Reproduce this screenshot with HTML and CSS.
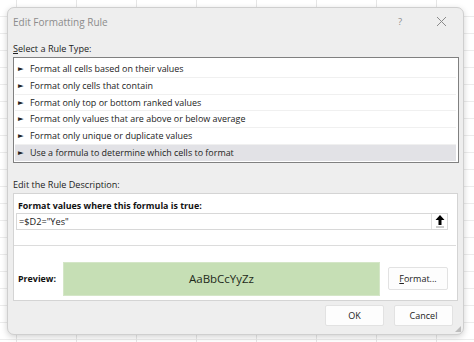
FILE: index.html
```html
<!DOCTYPE html>
<html>
<head>
<meta charset="utf-8">
<link rel="stylesheet" href="styles.css">
</head>
<body>
<div class="dialog">
  <div class="titlebar">
    <span class="title">Edit Formatting Rule</span>
    <span class="help">?</span>
    <span class="close">
      <svg width="11" height="11" viewBox="0 0 11 11"><path d="M1 1 L10 10 M10 1 L1 10" stroke="#8a8a8a" stroke-width="1" fill="none"/></svg>
    </span>
  </div>
  <div class="label first"><u>S</u>elect a Rule Type:</div>
  <div class="rulelist">
    <div class="rule"><span class="ptr">►</span>Format all cells based on their values</div>
    <div class="rule"><span class="ptr">►</span>Format only cells that contain</div>
    <div class="rule"><span class="ptr">►</span>Format only top or bottom ranked values</div>
    <div class="rule"><span class="ptr">►</span>Format only values that are above or below average</div>
    <div class="rule"><span class="ptr">►</span>Format only unique or duplicate values</div>
    <div class="rule selected"><span class="ptr">►</span>Use a formula to determine which cells to format</div>
  </div>
  <div class="label second">Edit the Rule Description:</div>
  <div class="descbox">
    <div class="formula-section">
      <div class="heading">Format values where this formula is true:</div>
      <div class="inputrow">
        <span class="formula">=$D2="Yes"</span>
        <span class="collapse">
          <svg width="12" height="14" viewBox="0 0 12 14"><path d="M6 1 L1.5 6 H4.5 V11 H7.5 V6 H10.5 Z" fill="#000"/><path d="M2 13 H10" stroke="#9a9a9a" stroke-width="1"/></svg>
        </span>
      </div>
    </div>
    <div class="preview-row">
      <span class="preview-label">Preview:</span>
      <div class="preview">AaBbCcYyZz</div>
      <button class="btn fmt"><u>F</u>ormat...</button>
    </div>
  </div>
  <div class="actions">
    <button class="btn ok">OK</button>
    <button class="btn cancel">Cancel</button>
    <span class="grip"></span>
  </div>
</div>
</body>
</html>
```
FILE: styles.css
```css
html, body {
  margin: 0;
  padding: 0;
}
body {
  width: 474px;
  height: 342px;
  overflow: hidden;
  background-color: #ffffff;
  background-image:
    repeating-linear-gradient(90deg, transparent 0, transparent 16px, #e6e6e6 16px, #e6e6e6 17px, transparent 17px, transparent 60px),
    repeating-linear-gradient(180deg, transparent 0, transparent 16px, #ececec 16px, #ececec 17px);
  font-family: "Open Sans", "Noto Sans", sans-serif;
  color: #222;
}
.dialog {
  position: relative;
  margin: 7px 0 0 7px;
  width: 455px;
  height: 326px;
  background: #eeeeee;
  border: 1px solid #cfcfcf;
  border-radius: 7px;
  box-shadow: 0 2px 6px rgba(0,0,0,0.18);
  display: flex;
  flex-direction: column;
}
.titlebar {
  height: 27px;
  display: flex;
  align-items: center;
  padding-left: 5px;
}
.title {
  flex: 1;
  font-size: 10px;
  color: #8c8c8c;
  padding-top: 1px;
}
.help {
  font-size: 9.5px;
  color: #8c8c8c;
  width: 12px;
  margin-right: 26px;
}
.close {
  width: 11px;
  height: 11px;
  margin-right: 16px;
  display: flex;
}
.label {
  font-size: 9.1px;
  color: #222;
  padding-left: 5px;
  line-height: 16px;
  height: 16px;
}
.label.first {
  padding-top: 6px;
}
.label.second {
  padding-top: 14px;
}
.rulelist {
  margin: 0 4px 0 5px;
  background: #fff;
  border: 1px solid #808080;
  padding: 3px 2px 1px 1px;
}
.rule {
  height: 15.8px;
  line-height: 16.4px;
  border-bottom: 1px solid #f0f0f0;
  font-size: 8.95px;
  color: #222;
  padding-left: 3px;
  white-space: nowrap;
}
.rule:last-child {
  border-bottom: none;
}
.rule.selected {
  background: #e2e2e6;
}
.ptr {
  font-family: "DejaVu Sans", sans-serif;
  font-size: 7.5px;
  display: inline-block;
  width: 12px;
  vertical-align: 1px;
}
.descbox {
  margin: 0 5px 0 5px;
  background: #fff;
  border: 1px solid #d4d4d4;
  height: 106px;
}
.formula-section {
  margin-right: 1px;
  border-bottom: 1px solid #dcdcdc;
  height: 51px;
}
.heading {
  font-size: 8.9px;
  font-weight: 700;
  padding: 5px 0 0 4px;
  line-height: 13px;
  height: 13px;
  color: #111;
}
.inputrow {
  margin: 1px 8px 0 2px;
  height: 15px;
  border: 1px solid #d8d8d8;
  display: flex;
  align-items: center;
}
.formula {
  flex: 1;
  font-size: 9.2px;
  padding-left: 2px;
  color: #222;
}
.collapse {
  width: 15px;
  height: 15px;
  border-left: 1px solid #e0e0e0;
  display: flex;
  align-items: center;
  justify-content: center;
}
.preview-row {
  display: flex;
  align-items: center;
  height: 54px;
  padding-top: 12px;
  box-sizing: border-box;
}
.preview-label {
  font-size: 8.9px;
  font-weight: 700;
  width: 45px;
  padding-left: 4px;
  color: #111;
}
.preview {
  width: 317px;
  height: 34px;
  background: #c6dfb5;
  border: 1px solid #d4e6c7;
  box-sizing: border-box;
  display: flex;
  align-items: center;
  justify-content: center;
  font-size: 11.5px;
  color: #1e2a1a;
}
.btn {
  font-family: "Open Sans", "Noto Sans", sans-serif;
  font-size: 9px;
  color: #222;
  background: #fdfdfd;
  border: 1px solid #e2e2e2;
  border-radius: 2px;
  padding: 0;
}
.fmt {
  width: 60px;
  height: 23px;
  margin-left: 8px;
}
.actions {
  display: flex;
  justify-content: flex-end;
  align-items: center;
  padding-top: 4px;
  padding-right: 10px;
  gap: 10px;
}
.ok, .cancel {
  width: 59px;
  height: 21px;
}
.grip {
  position: absolute;
  right: 2px;
  bottom: 2px;
  width: 6px;
  height: 6px;
  background-image: radial-gradient(circle, #b8b8b8 0.7px, transparent 0.8px);
  background-size: 2px 2px;
  clip-path: polygon(100% 0, 100% 100%, 0 100%);
}
```
